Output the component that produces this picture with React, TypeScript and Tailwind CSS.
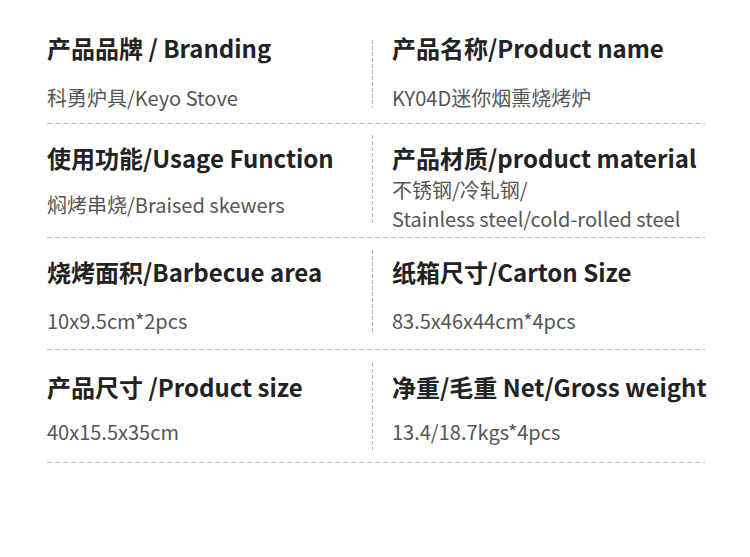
const font = 'font-["Noto_Sans_CJK_SC",sans-serif]';

type Cell = { title: string; values: string[] };

type Row = {
  left: Cell;
  right: Cell;
  height: string;
  pad: string;
  gap: string;
  line: string;
};

const rows: Row[] = [
  {
    left: { title: '产品品牌 / Branding', values: ['科勇炉具/Keyo Stove'] },
    right: { title: '产品名称/Product name', values: ['KY04D迷你烟熏烧烤炉'] },
    height: 'h-[123px]',
    pad: 'pt-[33px]',
    gap: 'mt-[20px]',
    line: 'mt-[40px] mb-[15px]',
  },
  {
    left: { title: '使用功能/Usage Function', values: ['焖烤串烧/Braised skewers'] },
    right: { title: '产品材质/product material', values: ['不锈钢/冷轧钢/', 'Stainless steel/cold-rolled steel'] },
    height: 'h-[113px]',
    pad: 'pt-[19px]',
    gap: 'mt-[17px]',
    line: 'mt-[11px] mb-[14px]',
  },
  {
    left: { title: '烧烤面积/Barbecue area', values: ['10x9.5cm*2pcs'] },
    right: { title: '纸箱尺寸/Carton Size', values: ['83.5x46x44cm*4pcs'] },
    height: 'h-[111px]',
    pad: 'pt-[19px]',
    gap: 'mt-[19px]',
    line: 'mt-[12px] mb-[14px]',
  },
  {
    left: { title: '产品尺寸 /Product size', values: ['40x15.5x35cm'] },
    right: { title: '净重/毛重 Net/Gross weight', values: ['13.4/18.7kgs*4pcs'] },
    height: 'h-[112px]',
    pad: 'pt-[22px]',
    gap: 'mt-[15px]',
    line: 'mt-[13px] mb-[12px]',
  },
];

function Info({ cell, pad, gap }: { cell: Cell; pad: string; gap: string }) {
  const multi = cell.values.length > 1;
  return (
    <div className={`flex flex-col ${pad}`}>
      <div className="text-[24px] leading-[30px] font-bold text-[#222] whitespace-nowrap">{cell.title}</div>
      <div className={multi ? 'mt-[2px]' : gap}>
        {cell.values.map(v => (
          <div key={v} className="text-[20px] leading-[29px] text-[#555] whitespace-nowrap">
            {v}
          </div>
        ))}
      </div>
    </div>
  );
}

function App() {
  return (
    <div className={`w-[750px] h-[557px] bg-white ${font}`}>
      <div className="ml-[47px] w-[658px]">
        {rows.map((row, i) => (
          <div key={i}>
            <div className={`grid grid-cols-[325px_1px_1fr] ${row.height}`}>
              <Info cell={row.left} pad={row.pad} gap={row.gap} />
              {/* vertical dashed divider */}
              <div className={`${row.line} bg-[linear-gradient(to_bottom,#b4b4b4_4px,transparent_4px)] bg-[length:1px_6px] bg-repeat-y`} />
              <div className="pl-[19px]">
                <Info cell={row.right} pad={row.pad} gap={row.gap} />
              </div>
            </div>
            <div className="h-px bg-[linear-gradient(to_right,#bdbdbd_5px,transparent_5px)] bg-[length:8px_1px] bg-repeat-x" />
          </div>
        ))}
      </div>
    </div>
  );
}

export default App;
